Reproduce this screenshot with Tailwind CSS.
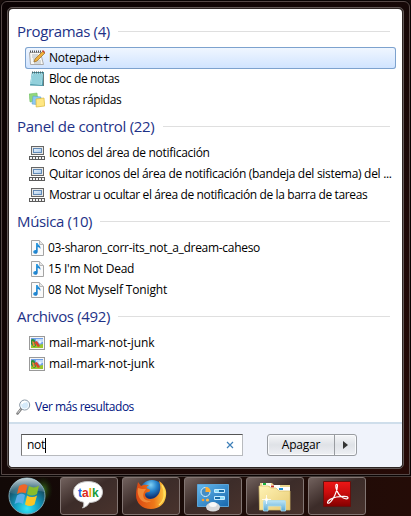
<!DOCTYPE html>
<html lang="es">
<head>
<meta charset="utf-8">
<title>Menú Inicio</title>
<script src="https://cdn.jsdelivr.net/npm/@tailwindcss/browser@4"></script>
</head>
<body class="w-[411px] h-[516px] overflow-hidden bg-[#160b09] font-['Open_Sans','Noto_Sans',sans-serif] text-[12px] text-black">
<svg class="absolute w-0 h-0">
  <defs>
    <linearGradient id="screen" x2="1" y2="1"><stop stop-color="#eaf4fd"/><stop offset="1" stop-color="#a9c9ea"/></linearGradient>
    <linearGradient id="note" x2="1" y2="1"><stop stop-color="#44b4f0"/><stop offset="1" stop-color="#0763b8"/></linearGradient>
    <symbol id="tray" viewBox="0 0 16 16"><rect x="2.500" y="1.500" width="12" height="8" fill="#e8e8e6" stroke="#666"/><rect x="4.500" y="3.500" width="8" height="4" fill="url(#screen)" stroke="#6189b5"/><path d="M0 11h16v4H0z" fill="#5b5b5b"/><path d="M1 13h14" stroke="#f4f4f4" stroke-width="2" stroke-dasharray="2 1"/></symbol>
    <symbol id="music" viewBox="0 0 14 16"><path d="M.5.5h8l4 4v11H.5z" fill="#fafafa" stroke="#a4a4a4"/><path d="M8.500.5v4h4" fill="#e6e6e6" stroke="#b5b5b5"/><path d="M5 3h1.700c.4 2.200 3.600 2.800 2.500 6-.3-1.300-1.300-1.800-2.500-2v4.500c0 1.500-1 2.300-2.400 2.300S2.200 13 2.200 11.800 3.600 9.700 5 10z" fill="url(#note)"/></symbol>
    <symbol id="photo" viewBox="0 0 16 14"><rect x=".5" y=".5" width="15" height="13" fill="#f7f7f7" stroke="#999"/><path d="M2 2h12v10H2z" fill="#6f9fe8"/><path d="M7 3h7v3H7z" fill="#c3dbf8"/><path d="M2 9l4-1 3 1 5-1v4H2z" fill="#9bc72c"/><path d="M2 4c1-2 4-1 4 1l1 5-2 1-3-3z" fill="#27903a"/><path d="M5 6l3-1 3 5-2 1z" fill="#d8442c"/><path d="M3 5l2 1 1 4-2 0z" fill="#ee8a36"/><circle cx="11" cy="6" r="1.500" fill="#e9f2ff"/></symbol>
  </defs>
</svg>

<section class="h-[476px] p-px rounded-t-[7px] bg-[#080303]">
  <div class="h-[474px] rounded-t-[6px] border border-[#554846] bg-linear-to-br from-[#0b0303] via-[#160807] to-[#260a06] p-[5px]">
    <div class="h-[462px] w-[397px] rounded-[5px] border border-[#625957] bg-[#2d2523] p-px">
      <div class="h-[458px] w-[393px] rounded-[4px] overflow-hidden bg-white flex flex-col">
        <main class="h-[413px] pt-[6px] pl-2 pr-[9px] whitespace-nowrap">
          <section class="h-[95px]">
            <h2 class="h-8 pr-[3px] flex items-center gap-2 text-[15px] text-[#1e3287]"><span class="w-[93px] tracking-[-0.35px]">Programas (4)</span><i class="h-px flex-1 bg-[#dfdfdf]"></i></h2>
            <ul>
              <li class="ml-2 h-[22px] -mb-px w-[371px] ring-1 ring-inset ring-[#7da2ce] rounded-[3px] bg-linear-to-b from-[#f1f7ff] to-[#cfe3ff] flex items-center pl-1">
                <svg class="w-4 h-4" viewBox="0 0 16 16"><path d="M.5 2.500h11l3 12H1.500z" fill="#f8f8f5" stroke="#aaa"/><path d="M1 1.500h12" stroke="#555" stroke-width="2" stroke-dasharray="1 1"/><path d="M3 5h6M3 7h5M4 9h4M4 11h8M5 13h7" stroke="#b0b7bb"/><path d="M14 1l2 2-8 8-3 1 1-3z" fill="#efb13b" stroke="#966a28" stroke-width=".7"/><path d="M14 0l2 2-1 1-2-2z" fill="#c84132"/></svg>
                <span class="ml-1 tracking-[-0.2px]">Notepad++</span></li>
              <li class="h-[21px] flex items-center pl-3">
                <svg class="w-4 h-4" viewBox="0 0 16 16"><path d="M3 1h12v14l-14-.5z" fill="#4796a7"/><path d="M3 2h11l-1 12L1 13z" fill="#a5dce5"/><path d="M4 4h9M3 6h10M3 8h10M3 10h9M2 12h10" stroke="#70bac8" stroke-width=".7"/><path d="M3 1.500h12" stroke="#48656b" stroke-width="2" stroke-dasharray="1 1"/><path d="M14.500 3v12" stroke="#667a7d"/></svg>
                <span class="ml-1 tracking-[-0.38px]">Bloc de notas</span></li>
              <li class="h-[21px] flex items-center pl-3">
                <svg class="w-4 h-4" viewBox="0 0 16 16"><path d="M0 2l8-1 1 8-8 1z" fill="#92d77b" stroke="#6bb860" stroke-width=".5"/><path d="M4 4l8 1-1 8-8-1z" fill="#8dc8f3" stroke="#579bcc" stroke-width=".5"/><path d="M7 7l8-1 .7 8-8.500 1z" fill="#ffe783" stroke="#d9b639" stroke-width=".7"/></svg>
                <span class="ml-1 tracking-[-0.42px]">Notas rápidas</span></li>
            </ul>
          </section>
          <section class="h-[95px]">
            <h2 class="h-8 pr-[3px] flex items-center gap-2 text-[15px] text-[#1e3287]"><span class="w-[138px] tracking-[-0.3px]">Panel de control (22)</span><i class="h-px flex-1 bg-[#dfdfdf]"></i></h2>
            <ul>
              <li class="h-[21px] flex items-center pl-3"><svg class="w-4 h-4 shrink-0"><use href="#tray"/></svg><span class="ml-1 tracking-[-0.3px]">Iconos del área de notificación</span></li>
              <li class="h-[21px] flex items-center pl-3"><svg class="w-4 h-4 shrink-0"><use href="#tray"/></svg><span class="ml-1 tracking-[-0.3px]">Quitar iconos del área de notificación (bandeja del sistema) del ...</span></li>
              <li class="h-[21px] flex items-center pl-3"><svg class="w-4 h-4 shrink-0"><use href="#tray"/></svg><span class="ml-1 tracking-[-0.38px]">Mostrar u ocultar el área de notificación de la barra de tareas</span></li>
            </ul>
          </section>
          <section class="h-[95px]">
            <h2 class="h-8 pr-[3px] flex items-center gap-2 text-[15px] text-[#1e3287]"><span class="w-[75px] tracking-[-0.35px]">Música (10)</span><i class="h-px flex-1 bg-[#dfdfdf]"></i></h2>
            <ul>
              <li class="h-[21px] flex items-center pl-[14px]"><svg class="w-[14px] h-4"><use href="#music"/></svg><span class="ml-[3px] tracking-[-0.3px]">03-sharon_corr-its_not_a_dream-caheso</span></li>
              <li class="h-[21px] flex items-center pl-[14px]"><svg class="w-[14px] h-4"><use href="#music"/></svg><span class="ml-[3px] tracking-[-0.27px]">15 I'm Not Dead</span></li>
              <li class="h-[21px] flex items-center pl-[14px]"><svg class="w-[14px] h-4"><use href="#music"/></svg><span class="ml-[3px] tracking-[-0.15px]">08 Not Myself Tonight</span></li>
            </ul>
          </section>
          <section class="h-[74px]">
            <h2 class="h-8 pr-[3px] flex items-center gap-2 text-[15px] text-[#1e3287]"><span class="w-[93px] tracking-[-0.35px]">Archivos (492)</span><i class="h-px flex-1 bg-[#dfdfdf]"></i></h2>
            <ul>
              <li class="h-[21px] flex items-center pl-3"><svg class="w-4 h-[14px]"><use href="#photo"/></svg><span class="ml-1 tracking-[-0.1px]">mail-mark-not-junk</span></li>
              <li class="h-[21px] flex items-center pl-3"><svg class="w-4 h-[14px]"><use href="#photo"/></svg><span class="ml-1 tracking-[-0.1px]">mail-mark-not-junk</span></li>
            </ul>
          </section>
          <a class="mt-[23px] -ml-px h-5 flex items-center text-[#00137f]">
            <svg class="w-[15px] h-4" viewBox="0 0 15 16"><path d="M1.500 14.500l4-5" stroke="#777" stroke-width="2.500" stroke-linecap="round"/><path d="M1.500 14.300l3-3.800" stroke="#ddd"/><circle cx="8.700" cy="6" r="5" fill="#d5eafa" stroke="#8794a0"/><circle cx="8.700" cy="6" r="4" fill="none" stroke="#fff" stroke-width=".8"/><path d="M6 5q1-3 4-2" fill="none" stroke="#fff" stroke-width="1.500"/></svg>
            <span class="ml-1 tracking-[-0.48px]">Ver más resultados</span>
          </a>
        </main>
        <footer class="h-[45px] border-t-2 border-[#cfdeeb] bg-[#f0f3fb] pt-[10px] pl-3 flex items-start">
          <div class="w-[222px] h-[22px] bg-white border border-[#b8babe] border-t-[#555] border-l-[#777] flex items-center pl-[5px] pr-2">
            <span class="tracking-[-0.3px]">not</span><i class="w-px h-[15px] bg-black"></i>
            <svg class="ml-auto w-2 h-2" viewBox="0 0 8 8"><path d="M1 1l6 6M7 1L1 7" stroke="#3d7fb8" stroke-width="1.200"/></svg>
          </div>
          <div class="ml-6 w-[90px] h-[22px] rounded-[3px] border border-[#999ca1] bg-linear-to-b from-[#f5f6f8] via-[#dfe2e7] via-50% to-[#eef0f4] shadow-[inset_0_0_0_1px_#fafbfd] flex">
            <button class="w-[67px] border-r border-[#999ca1] tracking-[-0.2px] leading-5">Apagar</button>
            <button class="flex-1 flex items-center justify-center"><svg class="w-[5px] h-2" viewBox="0 0 5 8"><path d="M0 0l5 4-5 4z" fill="#333"/></svg></button>
          </div>
        </footer>
      </div>
    </div>
  </div>
</section>

<nav class="h-10 border-t border-[#443a37] bg-linear-to-r from-[#120907] to-[#240c07] flex pl-[7px]">
  <svg class="w-12 h-[38px]" viewBox="0 0 48 38">
    <defs><radialGradient id="orb" cx=".5" cy=".85" r=".85"><stop stop-color="#35e5f6"/><stop offset=".4" stop-color="#139ac0"/><stop offset=".75" stop-color="#155269"/><stop offset="1" stop-color="#61808a"/></radialGradient>
    <radialGradient id="green"><stop stop-color="#49a827" stop-opacity=".7"/><stop offset="1" stop-color="#123008" stop-opacity="0"/></radialGradient>
    <linearGradient id="gloss" x2="0" y2="1"><stop stop-color="#d0dde1" stop-opacity=".85"/><stop offset="1" stop-color="#7898a5" stop-opacity=".2"/></linearGradient></defs>
    <ellipse cx="36" cy="13" rx="10" ry="14" fill="url(#green)"/><circle cx="20" cy="19" r="18" fill="url(#orb)" stroke="#7ca6b4"/>
    <path d="M3 16C4 5 12 1 20 1s16 5 17 14c-10-4-20 5-34 1z" fill="url(#gloss)"/>
    <path d="M12 9q5-3 8.500-.5l-2 8q-4-2-8.500.5z" fill="#ef6526"/><path d="M22 9q5 3 10-.5l-2 8.500q-5 3-10 0z" fill="#89bd2b"/><path d="M10 18.500q4-3 8-.5l-2 9q-4-3-8.500 0z" fill="#5aaee9"/><path d="M20 18.500q5 3 10 0l-2.500 9q-5 3-9.500 0z" fill="#fbc525"/>
  </svg>
  <div class="ml-[5px] flex gap-1">
    <div class="w-[58px] h-[38px] rounded-[3px] border border-[#827572] bg-linear-to-br from-[#72625e] via-[#3c2c29] via-45% to-[#49332d] flex justify-center">
      <svg class="w-9 h-[36px]" viewBox="0 0 36 36"><path d="M2.500 14C2.500 7.500 9 3.500 17 3.500S31.500 7.500 31.500 14 26 24.500 18.500 24.500c-1.500 3-4 4.500-7 5.500 1.200-1.700 1.600-3.500 1-5.800C6 23 2.500 19 2.500 14z" fill="#fff" stroke="#c3c3c3"/><g font-family="Liberation Sans" font-size="12" font-weight="700"><text x="7" y="18.500" fill="#2266dd">t</text><text x="11" y="18.500" fill="#dc281d">a</text><text x="17.700" y="18.500" fill="#efaa00">l</text><text x="21" y="18.500" fill="#159b3b">k</text></g></svg>
    </div>
    <div class="w-[58px] h-[38px] rounded-[3px] border border-[#827572] bg-linear-to-br from-[#72625e] via-[#3c2c29] via-45% to-[#49332d] flex justify-center">
      <svg class="w-8 h-[36px]" viewBox="0 0 32 36"><defs><radialGradient id="globe" cx=".45" cy=".2"><stop stop-color="#82d1f4"/><stop offset=".5" stop-color="#2682ca"/><stop offset="1" stop-color="#123576"/></radialGradient><linearGradient id="fox" x1="0" x2="1"><stop stop-color="#d84613"/><stop offset=".6" stop-color="#ed7819"/><stop offset="1" stop-color="#ffd545"/></linearGradient></defs><circle cx="17" cy="14.500" r="12.500" fill="url(#globe)"/><path d="M3 4l3 4c3-2 6-1 8-1-3 2-3 3-1 4 2 0 3 2 1 3-3 0-4 1-4 3 1 5 8 5 12 1s4-10 2-15c6 4 8 10 7 15-1 8-7 13-15 13C7 31 1 25 1 17c0-5 1-8 2-13z" fill="url(#fox)"/><path d="M3 10l4 1 4 0-2 3c-2 5 0 9 7 9-4 3-10 1-12-4-1-3-2-5-1-9z" fill="#f18a38"/><path d="M27 7c4 7 3 15-3 20" fill="none" stroke="#ffe163" stroke-width="1.300"/></svg>
    </div>
    <div class="w-[58px] h-[38px] rounded-[3px] border border-[#827572] bg-linear-to-br from-[#72625e] via-[#3c2c29] via-45% to-[#49332d] flex justify-center">
      <svg class="w-8 h-[36px]" viewBox="0 0 32 36"><defs><linearGradient id="panel" x2="1" y2="1"><stop stop-color="#65b9ee"/><stop offset="1" stop-color="#1767ad"/></linearGradient></defs><path d="M.5 6.500h31v22H.5z" fill="url(#panel)" stroke="#5aa3d6"/><circle cx="8.500" cy="14" r="4.500" fill="#438dc5" stroke="#d8f3ff"/><path d="M8.500 14V9q5 0 5 5z" fill="#ffad32"/><path d="M17.500 11.500h10v3h-10zM17.500 18.500h10v3h-10z" fill="#1a6da8" stroke="#c8edff"/><path d="M18 13h4M23 20h4" stroke="#8fdcf8" stroke-width="2"/><circle cx="6" cy="22" r="1.300" fill="#ff9e28"/><circle cx="10.500" cy="22" r="1.600" fill="#ffb545"/><ellipse cx="16" cy="29" rx="7" ry="4.500" fill="#d8d9db"/><ellipse cx="16" cy="26.500" rx="3.800" ry="2.500" fill="#f8f8f8"/></svg>
    </div>
    <div class="w-[58px] h-[38px] rounded-[3px] border border-[#827572] bg-linear-to-br from-[#72625e] via-[#3c2c29] via-45% to-[#49332d] flex justify-center">
      <svg class="w-[34px] h-[36px]" viewBox="0 0 34 36"><defs><linearGradient id="folder" y2="1" x2="1"><stop stop-color="#fff3b5"/><stop offset="1" stop-color="#e8cb74"/></linearGradient><linearGradient id="stand" x2="0" y2="1"><stop stop-color="#bce5f7"/><stop offset="1" stop-color="#5aa7d0"/></linearGradient></defs><path d="M2 5h12l2 2h16v8H2z" fill="#ead68e"/><path d="M4 5h9v3H4z" fill="#f8f7e9"/><path d="M5 6h3" stroke="#18b33a" stroke-width="2"/><path d="M12 7h10v4H12z" fill="#fff"/><path d="M13 8.500h3" stroke="#c93826" stroke-width="2"/><path d="M20 9h12v5H20z" fill="#fff"/><path d="M21 11h4" stroke="#1991d3" stroke-width="2"/><path d="M1 8h9l3 2h5l3 3h11v19H1.500z" fill="url(#folder)" stroke="#d9bf6b" stroke-width=".7"/><path d="M5.500 33V23.500q0-1 1-1h20q1 0 1 1V33H23v-5H10v5z" fill="url(#stand)" stroke="#a9dcf0" stroke-width=".8"/><path d="M8.500 17v9M4 21.500h9" stroke="#fff" stroke-width=".8"/><circle cx="8.500" cy="21.500" r="1.500" fill="#fff"/></svg>
    </div>
    <div class="w-[58px] h-[38px] rounded-[3px] border border-[#827572] bg-linear-to-br from-[#72625e] via-[#3c2c29] via-45% to-[#49332d] flex justify-center">
      <svg class="w-7 h-[36px]" viewBox="0 0 28 36"><defs><linearGradient id="red" x2="0" y2="1"><stop stop-color="#ed1716"/><stop offset=".45" stop-color="#cb0d0d"/><stop offset="1" stop-color="#830000"/></linearGradient></defs><path d="M.5 3.500h27v25H.5z" fill="url(#red)" stroke="#65100d"/><path d="M4.500 24.500c0-2 4-4.500 9-5.500 6-1 11.500-1 11.500.8 0 2-4 1-7-1.300-3-2.500-5.500-7.500-5.200-11 .2-1.500 1.700-1.500 1.700.3 0 5-4.500 14.500-8 17-1.200.8-2 .5-2-.3z" fill="none" stroke="#fff" stroke-width="1.200"/></svg>
    </div>
  </div>
</nav>
</body>
</html>
